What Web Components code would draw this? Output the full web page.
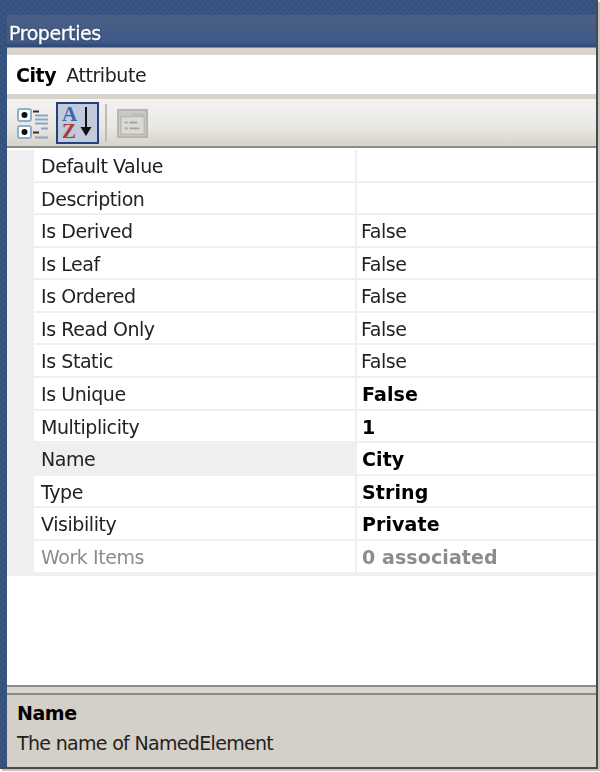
<!DOCTYPE html>
<html>
<head>
<meta charset="utf-8">
<title>Properties</title>
<style>
  html, body { margin:0; padding:0; background:#fff; }
  body { width:600px; height:772px; overflow:hidden; font-family:"DejaVu Sans", sans-serif; }
</style>
</head>
<body>
<props-window>
  <props-title>Properties</props-title>
  <props-heading name="City" kind="Attribute"></props-heading>
  <props-toolbar></props-toolbar>
  <props-grid>
    <props-row label="Default Value"></props-row>
    <props-row label="Description"></props-row>
    <props-row label="Is Derived" value="False"></props-row>
    <props-row label="Is Leaf" value="False"></props-row>
    <props-row label="Is Ordered" value="False"></props-row>
    <props-row label="Is Read Only" value="False"></props-row>
    <props-row label="Is Static" value="False"></props-row>
    <props-row label="Is Unique" value="False" bold></props-row>
    <props-row label="Multiplicity" value="1" bold></props-row>
    <props-row label="Name" value="City" bold selected></props-row>
    <props-row label="Type" value="String" bold></props-row>
    <props-row label="Visibility" value="Private" bold></props-row>
    <props-row label="Work Items" value="0 associated" bold disabled></props-row>
  </props-grid>
  <props-help title="Name">The name of NamedElement</props-help>
</props-window>

<script>
// outer frame: blue chrome around the panel
class PropsWindow extends HTMLElement {
  constructor(){
    super();
    this.attachShadow({mode:"open"}).innerHTML = `
    <style>
      :host { display:block; width:600px; height:772px; box-sizing:border-box; padding-right:2px; padding-bottom:3px;
        filter:blur(.7px); }
      .frame { height:100%; box-sizing:border-box; display:flex; flex-direction:column;
        padding:15px 0 0 7px; border-right:2px solid #4a4a4a; border-bottom:2px solid #4a4a4a;
        box-shadow:2px 2px 0 #c4c4c4;
        background-color:#3a5582;
        background-image:
          linear-gradient(45deg,#34507d 25%,transparent 25%,transparent 75%,#34507d 75%),
          linear-gradient(45deg,#34507d 25%,transparent 25%,transparent 75%,#34507d 75%);
        background-size:6px 6px; background-position:0 0,3px 3px; }
      ::slotted(props-grid) { flex:1; }
    </style>
    <div class="frame"><slot></slot></div>`;
  }
}

class PropsTitle extends HTMLElement {
  constructor(){
    super();
    this.attachShadow({mode:"open"}).innerHTML = `
    <style>
      :host { display:block; height:32px; box-sizing:border-box; padding:8px 0 0 2px;
        background:linear-gradient(#4a5f86,#3f5a87 85%,#2f4a78 97%);
        color:#fff; font:19px/20px "DejaVu Sans", sans-serif; letter-spacing:-.43px;
        -webkit-text-stroke:.3px #fff; text-shadow:0 0 2px #20345a; }
    </style>
    <slot></slot>`;
  }
}

class PropsHeading extends HTMLElement {
  constructor(){
    super();
    this.attachShadow({mode:"open"}).innerHTML = `
    <style>
      :host { display:block; box-sizing:border-box; height:52px; padding-top:7px;
        background:#d8d4ca; border-top:1px solid #8d8d8a; }
      .box { background:#fff; height:39px; box-sizing:border-box; padding-left:9px; display:flex; align-items:center; gap:10px;
        font:19px "DejaVu Sans", sans-serif; color:#222; letter-spacing:-.43px; }
      b { color:#000; font-weight:700; }
    </style>
    <div class="box"><b></b><span></span></div>`;
  }
  connectedCallback(){
    this.shadowRoot.querySelector("b").textContent = this.getAttribute("name");
    this.shadowRoot.querySelector("span").textContent = this.getAttribute("kind");
  }
}

class PropsToolbar extends HTMLElement {
  constructor(){
    super();
    this.attachShadow({mode:"open"}).innerHTML = `
    <style>
      :host { display:flex; align-items:center; height:49px; box-sizing:border-box; padding-left:10px;
        background:linear-gradient(#f4f3f0,#e9e7e2 60%,#d8d5cc 95%);
        border-bottom:2px solid #8a8a86; }
      .tree { width:32px; height:32px; }
      .az { width:43px; height:42px; box-sizing:border-box; border:2px solid #22417f; background:#c1cbdc; margin-left:7px;
        display:grid; grid-template-columns:auto 1fr; }
      .letters { padding:2px 0 0 4px; font:700 21px/17px "Liberation Serif", serif; }
      .letters div { height:17px; }
      .a { color:#3a66b0; }
      .z { color:#a8403a; }
      .arrow { width:20px; height:38px; }
      .sep { width:2px; height:38px; background:#bdbbb5; margin:0 10px 0 6px; }
      .page { width:31px; height:31px; margin-top:2px; }
      svg { display:block; }
    </style>
    <svg class="tree" viewBox="0 0 32 32">
      <g fill="#fff" stroke="#8fb0cc" stroke-width="2"><rect x="1" y="2" width="13" height="12" rx="2"/><rect x="1" y="19" width="13" height="12" rx="2"/></g>
      <circle cx="7.500" cy="8" r="3" fill="#111"/><circle cx="7.500" cy="25" r="3" fill="#111"/>
      <g fill="none" stroke-width="2">
        <path d="M16 4.500h6M16 25.500h6" stroke="#333"/>
        <path d="M18 8.500h13M18 12.500h13M18 16.500h13M24 21.500h7M18 30.500h13" stroke="#8aa5c4"/>
      </g>
    </svg>
    <div class="az">
      <div class="letters"><div class="a">A</div><div class="z">Z</div></div>
      <svg class="arrow" viewBox="0 0 20 38">
        <path d="M9 3v23" stroke="#111" stroke-width="2"/>
        <path d="M3.500 23h11l-5.500 9z" fill="#111"/>
      </svg>
    </div>
    <div class="sep"></div>
    <svg class="page" viewBox="0 0 32 32">
      <rect x="1" y="2" width="30" height="28" fill="#c9c8c3" stroke="#b5b4af" stroke-width="2"/>
      <rect x="4" y="9" width="24" height="18" fill="#dbdad5" stroke="#aeada8"/>
      <path d="M4 9h10l2-3h12v3" fill="#bdbcb7"/>
      <path d="M8 15h3M13 15h8M8 21h3M13 21h10" stroke="#a5a4a0" stroke-width="2"/>
    </svg>`;
  }
}

class PropsGrid extends HTMLElement {
  constructor(){
    super();
    this.attachShadow({mode:"open"}).innerHTML = `
    <style>
      :host { display:block; background:#fff; padding-top:2px; }
      .rows { background:#efefef; padding-left:27px; display:flex; flex-direction:column; padding-bottom:2px; }
    </style>
    <div class="rows"><slot></slot></div>`;
  }
}

class PropsRow extends HTMLElement {
  constructor(){
    super();
    this.attachShadow({mode:"open"}).innerHTML = `
    <style>
      :host { display:grid; grid-template-columns:321px 1fr; height:32.580px; box-sizing:border-box;
        font:19px/32.500px "DejaVu Sans", sans-serif; color:#222; letter-spacing:-.43px; }
      .k,.v { background:#fff; height:30.600px; white-space:nowrap; overflow:hidden; box-sizing:border-box; }
      .k { padding-left:7px; }
      .v { margin-left:2px; padding-left:4px; }
      :host([bold]) .v { font-weight:700; color:#000; padding-left:5px; letter-spacing:.1px; }
      :host([selected]) .k { background:#efefef; height:32.600px; }
      :host([disabled]) .k, :host([disabled]) .v { color:#8c8c8c; }
    </style>
    <div class="k"></div><div class="v"></div>`;
  }
  connectedCallback(){
    this.shadowRoot.querySelector(".k").textContent = this.getAttribute("label");
    this.shadowRoot.querySelector(".v").textContent = this.getAttribute("value") || "";
  }
}

class PropsHelp extends HTMLElement {
  constructor(){
    super();
    this.attachShadow({mode:"open"}).innerHTML = `
    <style>
      :host { display:block; height:82px; box-sizing:border-box; background:#d4d0c8;
        border-top:2px solid #8c8c88; font:19px "DejaVu Sans", sans-serif; color:#222; letter-spacing:-.43px; }
      .band { height:6px; background:#d9d6cd; border-bottom:2px solid #8a8a86; }
      .t { font-weight:700; color:#000; padding:6px 0 0 10px; line-height:24px; }
      .d { padding:6px 0 0 10px; line-height:24px; letter-spacing:-.68px; }
    </style>
    <div class="band"></div><div class="t"></div><div class="d"><slot></slot></div>`;
  }
  connectedCallback(){
    this.shadowRoot.querySelector(".t").textContent = this.getAttribute("title");
  }
}

customElements.define("props-window", PropsWindow);
customElements.define("props-title", PropsTitle);
customElements.define("props-heading", PropsHeading);
customElements.define("props-toolbar", PropsToolbar);
customElements.define("props-grid", PropsGrid);
customElements.define("props-row", PropsRow);
customElements.define("props-help", PropsHelp);
</script>
</body>
</html>
